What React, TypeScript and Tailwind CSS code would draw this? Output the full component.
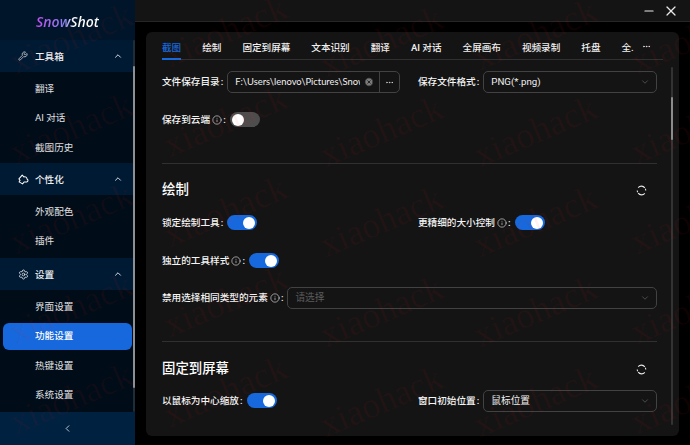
import { ChevronUp, ChevronDown, ChevronLeft, Ellipsis, Minus, X, Wrench, Settings, Info, CircleX } from 'lucide-react';

const font = { fontFamily: 'Roboto, "Noto Sans CJK SC", sans-serif' };

// watermark baselines, columns alternate a little in height
const marks = [
    [18, 80], [18, 170], [18, 260], [18, 350], [18, 440],
    [172, 73], [172, 163], [172, 253], [172, 343], [172, 433],
    [328, 83], [328, 173], [328, 263], [328, 353], [328, 443],
    [482, 76], [482, 173], [482, 263], [482, 353], [482, 443],
    [639, 80], [639, 170], [639, 260], [639, 350], [639, 440],
];

const Reload = () => (
    <svg width="11" height="11" viewBox="0 0 12 12" fill="none" stroke="#e8e8e8" strokeWidth="1.2">
        <path d="M2.4 2.9A4.6 4.6 0 0 1 9.6 3.1" />
        <path d="M9.6 9.1A4.6 4.6 0 0 1 2.4 8.9" />
        <path d="M10.6 6a4.6 4.6 0 0 0-.4-1.9" />
        <path d="M1.4 6a4.6 4.6 0 0 0 .4 1.9" />
    </svg>
);

const Skin = () => (
    <svg width="11" height="11" viewBox="0 0 12 12" fill="none" stroke="#fff" strokeWidth="1.1" strokeLinejoin="round">
        <path d="M4.6 1.2 6.4 3.2a2.4 2.4 0 0 1 3.4 2.2c1.4.5 1.6 2.8-.2 3.2l-3 .1L5 10.8 2.6 9.4 1.2 8.6l1-1.6L1 5.4z" />
    </svg>
);

const Toggle = ({ on = true }: { on?: boolean }) => (
    <div className={`w-[30px] h-[15px] rounded-full flex items-center px-[2px] ${on ? 'bg-[#1668dc] justify-end' : 'bg-[#4d4d4d] justify-start'}`}>
        <div className="w-[12px] h-[12px] rounded-full bg-white" />
    </div>
);

const Label = ({ text, info }: { text: string; info?: boolean }) => (
    <span className="flex items-center pt-[1px] text-[9.65px] font-medium text-[#f5f5f5] whitespace-nowrap">
        {text}
        {info && <Info size={10} strokeWidth={1.4} className="ml-[2px]" />}
        <span className="ml-[1px] mr-[4px]">:</span>
    </span>
);

const SubItem = ({ text, active }: { text: string; active?: boolean }) => (
    <div className={`h-[27px] mt-[2.5px] mx-[3px] pl-[32px] pt-[1px] flex items-center text-[9.6px] rounded-[6px] ${active ? 'bg-[#1668dc] text-white font-medium' : 'text-[#e0e2e5]'}`}>
        {text}
    </div>
);

const Group = ({ icon, text }: { icon: React.ReactNode; text: string }) => (
    <div className="h-[32px] bg-[#001a33] flex items-center pl-[18px] pr-[12px] text-[9.6px] font-medium text-[#f0f0f0]">
        <span className="w-[17px] flex items-center">{icon}</span>
        <span className="flex-1 pt-[2px]">{text}</span>
        <ChevronUp size={10} strokeWidth={2} color="#fff" />
    </div>
);

const SubList = ({ className, children }: { className: string; children: React.ReactNode }) => (
    <div className={`flex flex-col pt-[0.5px] ${className}`}>{children}</div>
);

const Select = ({ text, muted, className }: { text: string; muted?: boolean; className?: string }) => (
    <div className={`h-[22px] border border-[#424242] rounded-[5px] flex items-center pl-[7px] pr-[6px] text-[9.7px] ${muted ? 'text-[#5c5c5c]' : 'text-[#f0f0f0]'} ${className ?? ''}`}>
        <span className="flex-1 pt-[1px] whitespace-nowrap">{text}</span>
        <ChevronDown size={10} strokeWidth={1.5} color="#6b6b6b" />
    </div>
);

const Divider = () => <div className="h-px bg-[#303030]" />;

const SectionTitle = ({ text }: { text: string }) => (
    <div className="flex items-center justify-between pr-[10px]">
        <span className="text-[13.4px] leading-[20px] font-medium text-white">{text}</span>
        <Reload />
    </div>
);

const tabs = ['截图', '绘制', '固定到屏幕', '文本识别', '翻译', 'AI 对话', '全屏画布', '视频录制', '托盘', '全.'];

export default function App() {
    return (
        <div className="relative w-[690px] h-[445px] overflow-hidden flex bg-black" style={font}>
            <aside className="w-[135px] h-full flex flex-col bg-[#000c17] relative">
                <div className="h-[40px] bg-[#001529] shrink-0 flex justify-center pt-[12px]">
                    <span className="text-[14px] leading-[20px] font-semibold italic bg-gradient-to-r from-[#c04df0] via-[#8a7df0] via-45% to-white to-60% bg-clip-text text-transparent" style={{ fontFamily: '"Open Sans", sans-serif' }}>SnowShot</span>
                </div>
                <div className="flex-1">
                    <Group icon={<Wrench size={10} strokeWidth={1.5} color="#fff" />} text="工具箱" />
                    <SubList className="h-[91px]">
                        <SubItem text="翻译" />
                        <SubItem text="AI 对话" />
                        <SubItem text="截图历史" />
                    </SubList>
                    <Group icon={<Skin />} text="个性化" />
                    <SubList className="h-[63px]">
                        <SubItem text="外观配色" />
                        <SubItem text="插件" />
                    </SubList>
                    <Group icon={<Settings size={11} strokeWidth={1.5} color="#fff" />} text="设置" />
                    <SubList className="">
                        <SubItem text="界面设置" />
                        <SubItem text="功能设置" active />
                        <SubItem text="热键设置" />
                        <SubItem text="系统设置" />
                    </SubList>
                </div>
                <div className="h-[33px] bg-[#002140] shrink-0 flex items-center justify-center">
                    <ChevronLeft size={11} strokeWidth={1.6} color="#fff" />
                </div>
                <div className="absolute right-0 top-[40px] w-[2px] h-[372px] bg-[#1f2c3a] rounded-full" />
                <div className="absolute right-0 top-[66px] w-[2px] h-[322px] bg-[#8c8f94] rounded-full" />
            </aside>
            <main className="flex-1 flex flex-col min-w-0">
                <div className="h-[21px] bg-[#141414] border-b border-[#262626] shrink-0 flex items-center justify-end gap-[7px] pr-[11px] box-content">
                    <Minus size={14} strokeWidth={2} color="#e8e8e8" />
                    <X size={16} strokeWidth={1.8} color="#e8e8e8" />
                </div>
                <div className="flex-1 pt-[10px] pb-[9px] pl-[11px] pr-[11px] min-h-0">
                    <div className="relative h-full bg-[#141414] rounded-[6px] pl-[16px] pr-[22px] pt-[4px]">
                        <div className="h-[24px] pt-[1px] border-b border-[#303030] flex items-center gap-[21px] text-[9.6px] font-medium text-[#f0f0f0] whitespace-nowrap -mr-[6px]">
                            {tabs.map((t, i) => (
                                <span key={t} className={i === 0 ? 'relative h-full flex items-center text-[#1668dc]' : 'flex items-center'}>
                                    {t}
                                    {i === 0 && <span className="absolute left-0 right-0 bottom-[-1px] h-[2px] bg-[#1668dc]" />}
                                </span>
                            ))}
                            <Ellipsis size={9} className="-ml-[13px] mb-[4px]" />
                        </div>
                        <div className="mt-[11px] flex items-center">
                            <div className="w-[256px] flex items-center shrink-0">
                                <Label text="文件保存目录" />
                                <div className="w-[173px] h-[22px] border border-[#424242] rounded-[5px] flex items-center text-[9.4px] font-['Lato'] text-[#f0f0f0]">
                                    <span className="w-[132px] pl-[7px] pt-[1px] overflow-hidden whitespace-nowrap">F:\Users\lenovo\Pictures\Snow</span>
                                    <CircleX size={10} fill="#7a7a7a" color="#141414" className="ml-[4px]" />
                                    <span className="ml-[5px] flex-1 h-full border-l border-[#424242] flex items-center justify-center">
                                        <Ellipsis size={9} strokeWidth={1.5} />
                                    </span>
                                </div>
                            </div>
                            <Label text="保存文件格式" />
                            <Select text="PNG(*.png)" className="flex-1" />
                        </div>
                        <div className="mt-[19px] flex items-center h-[15px]">
                            <Label text="保存到云端" info />
                            <Toggle on={false} />
                        </div>
                        <div className="mt-[36px]"><Divider /></div>
                        <div className="mt-[16px]"><SectionTitle text="绘制" /></div>
                        <div className="mt-[15px] flex items-center h-[15px]">
                            <div className="w-[256px] flex items-center shrink-0">
                                <Label text="锁定绘制工具" />
                                <Toggle />
                            </div>
                            <Label text="更精细的大小控制" info />
                            <Toggle />
                        </div>
                        <div className="mt-[23px] flex items-center h-[15px]">
                            <Label text="独立的工具样式" info />
                            <Toggle />
                        </div>
                        <div className="mt-[19px] flex items-center">
                            <Label text="禁用选择相同类型的元素" info />
                            <Select text="请选择" muted className="flex-1" />
                        </div>
                        <div className="mt-[32px]"><Divider /></div>
                        <div className="mt-[17px]"><SectionTitle text="固定到屏幕" /></div>
                        <div className="mt-[11px] flex items-center">
                            <div className="w-[256px] flex items-center shrink-0">
                                <Label text="以鼠标为中心缩放" />
                                <Toggle />
                            </div>
                            <Label text="窗口初始位置" />
                            <Select text="鼠标位置" className="flex-1" />
                        </div>
                        <div className="absolute right-[6px] top-[35px] bottom-[11px] w-[2px] bg-[#333333] rounded-full" />
                        <div className="absolute right-[6px] top-[65px] h-[43px] w-[2px] bg-[#8c8c8c] rounded-full" />
                    </div>
                </div>
            </main>
            <div className="absolute inset-0 pointer-events-none">
                {marks.map(([x, y]) => (
                    <span
                        key={`${x}-${y}`}
                        className="absolute h-[36px] text-[36px] leading-none text-[#ff2020]/[0.06] origin-bottom-left -rotate-[23deg] whitespace-nowrap"
                        style={{ left: x, top: y - 36, fontFamily: '"Liberation Serif", serif' }}
                    >
                        xiaohack
                    </span>
                ))}
            </div>
        </div>
    );
}
